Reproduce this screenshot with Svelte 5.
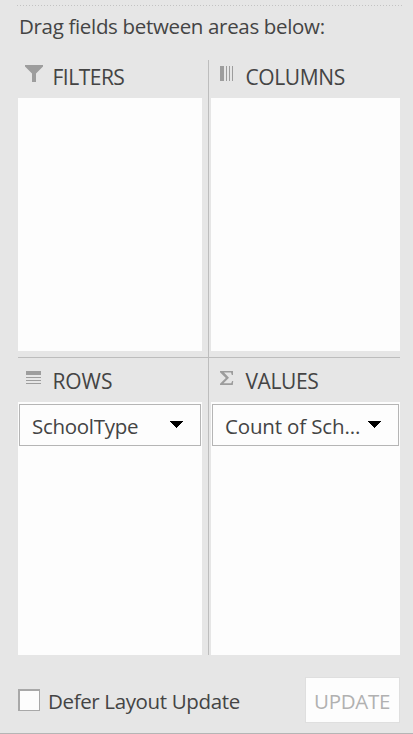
<script>
  const areas = [
    { title: 'FILTERS', icon: 'filter', spacing: -0.5, fields: [] },
    { title: 'COLUMNS', icon: 'columns', spacing: -0.4, fields: [] },
    { title: 'ROWS', icon: 'rows', spacing: -0.1, fields: [{ name: 'SchoolType', spacing: -0.3 }] },
    { title: 'VALUES', icon: 'sigma', spacing: -0.4, fields: [{ name: 'Count of Sch...', spacing: -0.15 }] }
  ];
</script>

<main class="pane">
  <div class="dots"></div>
  <p class="hint">Drag fields between areas below:</p>
  <div class="grid">
    {#each areas as area, i}
      <section class="area" class:right={i % 2 === 1} class:lower={i > 1}>
        <header>
          <svg width="20" height="20" viewBox="0 0 20 20" fill="#9d9d9d" shape-rendering={area.icon === 'sigma' || area.icon === 'filter' ? 'auto' : 'crispEdges'}>
            {#if area.icon === 'filter'}
              <path d="M0 0h18v1.500L11 8.500V17H7V8.500L0 1.500z" />
            {:else if area.icon === 'columns'}
              <path d="M2 1h4v15H2zM8 1h1v15H8zM11 1h1v15h-1zM14 1h1v15h-1z" />
            {:else if area.icon === 'rows'}
              <path d="M1 1h15v4H1zM1 7h15v1H1zM1 10h15v1H1zM1 13h15v1H1z" />
            {:else}
              <path d="M2 1h13v4h-1.200L13 2.500H6L11 7.800 5.500 13.200H13.200L14.100 11H15.200L14.800 15H2v-1.300L7.800 8 2 2.200z" />
            {/if}
          </svg>
          <span style="letter-spacing: {area.spacing}px">{area.title}</span>
        </header>
        <div class="drop">
          {#each area.fields as field}
            <button class="field">
              <span style="letter-spacing: {field.spacing}px">{field.name}</span>
              <svg width="13" height="7" viewBox="0 0 13 7" shape-rendering="crispEdges"><path d="M0 0h13L6.500 7z" /></svg>
            </button>
          {/each}
        </div>
      </section>
    {/each}
  </div>
  <footer>
    <label><input type="checkbox" /><span>Defer Layout Update</span></label>
    <button class="update" disabled>UPDATE</button>
  </footer>
</main>

<style>
  .pane {
    box-sizing: border-box;
    width: 413px;
    height: 734px;
    padding: 5px 13px 0 18px;
    overflow: hidden;
    background: #e6e6e6;
    border-bottom: 1px solid #b5b5b5;
    color: #444;
    font: 20.5px/28px "Open Sans", "Noto Sans", sans-serif;
  }
  .dots {
    height: 1px;
    margin-left: -1px;
    width: 385px;
    background: repeating-linear-gradient(90deg, #c3c3c3 0 1px, transparent 1px 3px);
  }
  .hint {
    margin: 6px 0 0 1px;
    height: 48px;
    line-height: 28px;
    letter-spacing: -0.33px;
    white-space: nowrap;
  }
  .grid {
    display: grid;
    grid-template-columns: 190px 192px;
    grid-template-rows: 297px 298px;
  }
  .area {
    box-sizing: border-box;
    display: flex;
    flex-direction: column;
    padding-right: 6px;
  }
  .right {
    padding: 0 0 0 2px;
    border-left: 1px solid #bdbdbd;
  }
  .lower { border-top: 1px solid #bdbdbd; }
  .area:not(.lower) { padding-bottom: 6px; }
  header {
    display: flex;
    height: 38px;
    flex: none;
    padding-left: 7px;
    font-size: 21px;
  }
  header svg { margin-top: 5px; flex: none; }
  header span { margin: 3px 0 0 7.500px; }
  .lower header { height: 44px; }
  .lower header svg { margin-top: 12px; }
  .lower header span { margin-top: 9px; }
  .drop {
    flex: 1;
    padding: 2px 1px;
    background: #fdfdfd;
  }
  .field {
    box-sizing: border-box;
    display: flex;
    justify-content: space-between;
    align-items: center;
    width: 100%;
    height: 42px;
    padding: 1px 17px 0 12px;
    border: 1px solid #b5b5b5;
    background: #fdfdfd;
    color: #444;
    font: inherit;
    white-space: nowrap;
  }
  .field svg { margin-top: -2px; flex: none; fill: #000; }
  footer {
    display: flex;
    justify-content: space-between;
    margin-top: 22px;
    width: 382px;
  }
  label { display: flex; margin-top: 12px; }
  input {
    appearance: none;
    box-sizing: border-box;
    width: 22px;
    height: 22px;
    margin: 0;
    border: 1px solid #a8a8a8;
    border-top-width: 2px;
    border-left-width: 2px;
    background: #fdfdfd;
  }
  label span { margin: -2px 0 0 8px; letter-spacing: -0.36px; white-space: nowrap; }
  .update {
    box-sizing: border-box;
    width: 95px;
    height: 46px;
    padding: 1px 1px 0 0;
    border: 1px solid #dfdfdf;
    background: #fdfdfd;
    color: #b1b1b1;
    font: inherit;
    letter-spacing: -0.3px;
  }
</style>
